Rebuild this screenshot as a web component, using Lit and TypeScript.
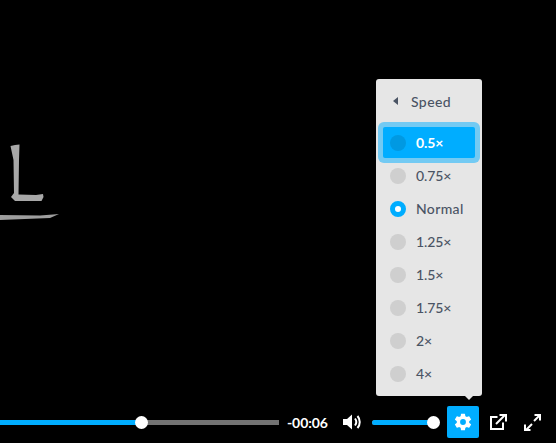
import {LitElement, html, css, svg} from 'lit';
import {customElement, state} from 'lit/decorators.js';

const SPEEDS = ['0.5×', '0.75×', 'Normal', '1.25×', '1.5×', '1.75×', '2×', '4×'];

@customElement('app-root')
export class AppRoot extends LitElement {
    @state()
    selected = 'Normal';

    @state()
    focused = '0.5×';

    static override styles = css`
      :host {
        display: block;
        width: 556px;
        height: 443px;
        position: relative;
        overflow: hidden;
        background: #000;
        font-family: Lato, 'Noto Sans', sans-serif;
      }
      .stage {
        position: absolute;
        left: 0;
        top: 135px;
      }
      .bar {
        position: absolute;
        left: 0;
        right: 0;
        bottom: 5px;
        height: 32px;
        display: flex;
        align-items: center;
        color: #fff;
      }
      .track {
        height: 5px;
        background: #737373;
        position: relative;
        display: flex;
      }
      .seek { width: 279px; margin-right: 8px; }
      .seek .fill { width: 141px; }
      .fill { height: 100%; background: #00adff; }
      .knob {
        position: absolute;
        top: -4px;
        width: 13px;
        height: 13px;
        border-radius: 50%;
        background: #fff;
      }
      .seek .knob { left: 135px; }
      .time {
        width: 40px;
        font-size: 14px;
        font-weight: 700;
        letter-spacing: -0.1px;
        white-space: nowrap;
      }
      .vol-btn {
        width: 20px;
        height: 20px;
        margin-left: 15px;
        margin-right: 10px;
      }
      .volume {
        width: 61px;
        margin-right: 14px;
        border-radius: 3px;
      }
      .volume .fill { width: 100%; border-radius: 3px; }
      .volume .knob { right: -7px; }
      .gear {
        width: 32px;
        height: 32px;
        border-radius: 2px;
        background: #00adff;
        display: flex;
        align-items: center;
        justify-content: center;
        margin-right: 9px;
      }
      .plain {
        width: 20px;
        height: 20px;
        display: block;
      }
      .share { margin-right: 15px; }
      .menu {
        position: absolute;
        left: 376px;
        top: 79px;
        width: 106px;
        height: 317px;
        box-sizing: border-box;
        padding: 4px 7px 0;
        background: #e6e6e6;
        border-radius: 3px;
        color: #4a5464;
        font-size: 14px;
      }
      .menu::after {
        content: '';
        position: absolute;
        left: 89px;
        bottom: -4px;
        border-left: 4px solid transparent;
        border-right: 4px solid transparent;
        border-top: 4px solid #e6e6e6;
      }
      .head {
        height: 36px;
        display: flex;
        align-items: center;
        font-size: 14px;
        font-weight: 500;
        letter-spacing: 0.4px;
        margin-bottom: 8px;
      }
      .arrow {
        width: 0;
        height: 0;
        margin-left: 10px;
        margin-right: 13px;
        border-top: 4px solid transparent;
        border-bottom: 4px solid transparent;
        border-right: 5px solid #4a5464;
      }
      .row {
        height: 31px;
        margin-bottom: 2px;
        display: flex;
        align-items: center;
        gap: 10px;
        padding-left: 7px;
        border-radius: 2px;
        font-weight: 500;
        letter-spacing: -0.1px;
      }
      .row .word { letter-spacing: 0.35px; }
      .row.focus {
        background: #00adff;
        color: #fff;
        font-weight: 700;
        box-shadow: 0 0 0 5px rgba(0, 173, 255, 0.5);
      }
      .dot {
        width: 16px;
        height: 16px;
        border-radius: 50%;
        background: #cfcfcf;
        box-sizing: border-box;
      }
      .row.focus .dot { background: #0099e2; }
      .row.on .dot {
        background: #fff;
        border: 5px solid #00adff;
      }
    `;

    private letter() {
        return svg`<svg width="70" height="90" viewBox="0 0 70 90">
            <path d="M10.5 11 L15 10 L19.5 9.5 L19 25 L18.5 59.5 L36 60 L43 59 L43.5 62 L41.5 66 L15 66 L11 62 L14 58 L13.5 25 L12 18 Z" fill="#a8a8a8"/>
            <path d="M0 80 L40 80.5 L59 79 L50 83 L0 85 Z" fill="#9e9e9e"/>
        </svg>`;
    }

    override render() {
        return html`
            <div class="stage">${this.letter()}</div>
            <div class="menu">
                <div class="head"><span class="arrow"></span>Speed</div>
                ${SPEEDS.map(s => html`
                    <div class="row ${s === this.focused ? 'focus' : ''} ${s === this.selected ? 'on' : ''}">
                        <span class="dot"></span>
                        <span class="${s === 'Normal' ? 'word' : ''}">${s}</span>
                    </div>
                `)}
            </div>
            <div class="bar">
                <div class="track seek">
                    <div class="fill"></div>
                    <div class="knob"></div>
                </div>
                <div class="time">-00:06</div>
                <svg class="vol-btn" viewBox="0 0 20 20" fill="none">
                    <path d="M1 7 H5 L10 2.5 V17.5 L5 13 H1 Z" fill="#fff"/>
                    <path d="M13 6.5 C14.5 8.5 14.5 11.5 13 13.5 M15.5 4 C18.5 7.5 18.5 12.5 15.5 16" stroke="#fff" stroke-width="2"/>
                </svg>
                <div class="track volume">
                    <div class="fill"></div>
                    <div class="knob"></div>
                </div>
                <div class="gear">
                    <svg width="20" height="20" viewBox="0 0 24 24">
                        <path fill="#fff" fill-rule="evenodd" d="M19.4 13a7.5 7.5 0 0 0 0-2l2.1-1.6a.5.5 0 0 0 .1-.7l-2-3.4a.5.5 0 0 0-.6-.2l-2.5 1a7.3 7.3 0 0 0-1.7-1l-.4-2.7a.5.5 0 0 0-.5-.4h-3.8a.5.5 0 0 0-.5.4l-.4 2.7a7.3 7.3 0 0 0-1.7 1l-2.5-1a.5.5 0 0 0-.6.2l-2 3.4a.5.5 0 0 0 .1.7L4.6 11a7.5 7.5 0 0 0 0 2l-2.1 1.6a.5.5 0 0 0-.1.7l2 3.4a.5.5 0 0 0 .6.2l2.5-1a7.3 7.3 0 0 0 1.7 1l.4 2.7a.5.5 0 0 0 .5.4h3.8a.5.5 0 0 0 .5-.4l.4-2.7a7.3 7.3 0 0 0 1.7-1l2.5 1a.5.5 0 0 0 .6-.2l2-3.4a.5.5 0 0 0-.1-.7ZM12 15.5a3.5 3.5 0 1 1 0-7 3.5 3.5 0 0 1 0 7Z"/>
                    </svg>
                </div>
                <svg class="plain share" viewBox="0 0 20 20" fill="none" stroke="#fff" stroke-width="2">
                    <path d="M9.5 5 H3 V17 H15 V10.5"/>
                    <path d="M8 12 L17 3"/>
                    <path d="M11.5 3 H18 V9.5"/>
                </svg>
                <svg class="plain" viewBox="0 0 20 20" fill="none" stroke="#fff" stroke-width="2">
                    <path d="M11 9 L17 3"/>
                    <path d="M11.5 3 H17 V8.5"/>
                    <path d="M9 12 L3 18"/>
                    <path d="M2 12.5 V18 H7.5"/>
                </svg>
            </div>
    `;
    }
}

declare global {
    interface HTMLElementTagNameMap {
        'app-root': AppRoot;
    }
}
